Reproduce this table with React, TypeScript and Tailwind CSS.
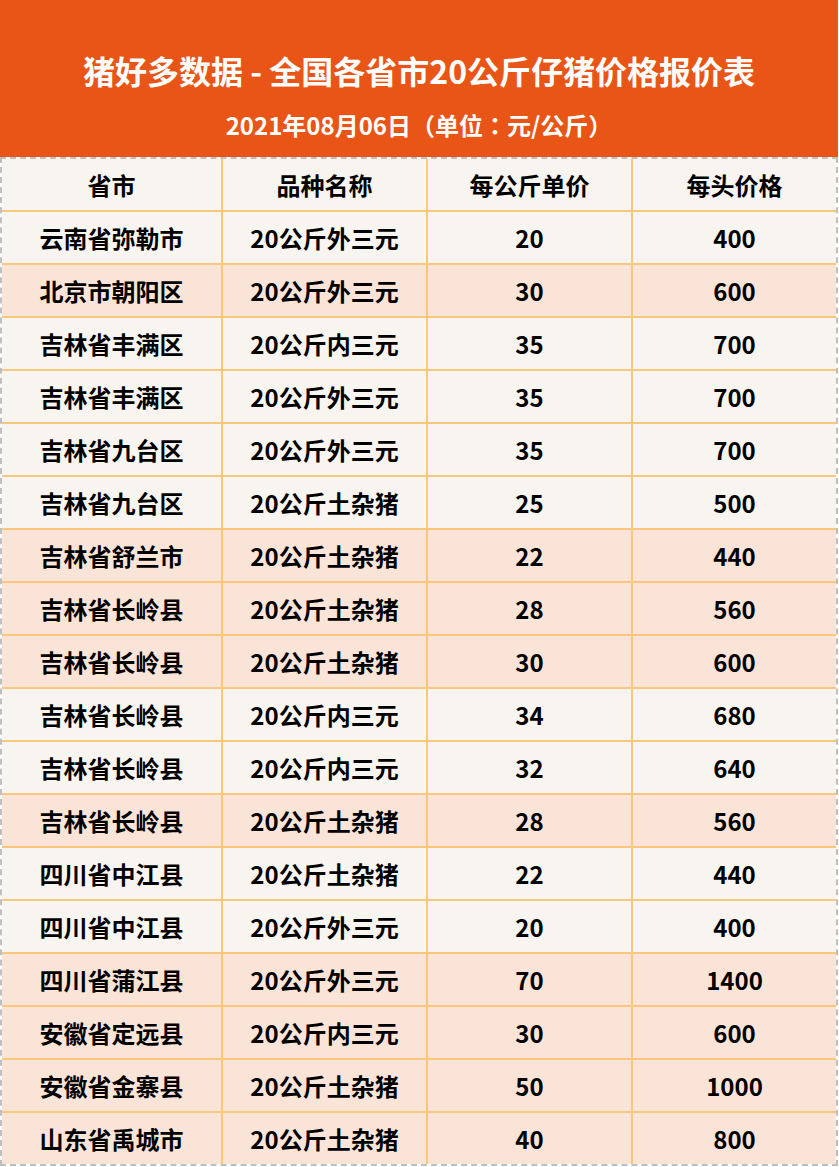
const rows: [string, string, string, string, boolean][] = [
  ["云南省弥勒市", "20公斤外三元", "20", "400", false],
  ["北京市朝阳区", "20公斤外三元", "30", "600", true],
  ["吉林省丰满区", "20公斤内三元", "35", "700", false],
  ["吉林省丰满区", "20公斤外三元", "35", "700", false],
  ["吉林省九台区", "20公斤外三元", "35", "700", false],
  ["吉林省九台区", "20公斤土杂猪", "25", "500", false],
  ["吉林省舒兰市", "20公斤土杂猪", "22", "440", true],
  ["吉林省长岭县", "20公斤土杂猪", "28", "560", true],
  ["吉林省长岭县", "20公斤土杂猪", "30", "600", true],
  ["吉林省长岭县", "20公斤内三元", "34", "680", false],
  ["吉林省长岭县", "20公斤内三元", "32", "640", false],
  ["吉林省长岭县", "20公斤土杂猪", "28", "560", true],
  ["四川省中江县", "20公斤土杂猪", "22", "440", false],
  ["四川省中江县", "20公斤外三元", "20", "400", false],
  ["四川省蒲江县", "20公斤外三元", "70", "1400", true],
  ["安徽省定远县", "20公斤内三元", "30", "600", true],
  ["安徽省金寨县", "20公斤土杂猪", "50", "1000", true],
  ["山东省禹城市", "20公斤土杂猪", "40", "800", true],
];

const headers = ["省市", "品种名称", "每公斤单价", "每头价格"];

const Cell = ({ children, last, bottom }) => (
  <div
    className={
      "flex items-center justify-center text-[24px] leading-none font-bold text-black " +
      (last ? "" : "border-r-2 border-[#fac87c] ") +
      (bottom ? "h-[51px]" : "h-[53px] border-b-2 border-[#fac87c]")
    }
  >
    {children}
  </div>
);

export default function App() {
  return (
    <div className="w-[838px] bg-white" style={{ fontFamily: '"Noto Sans CJK SC", "Noto Sans", sans-serif' }}>
      <div className="h-[157px] bg-[#e95516] flex flex-col items-center text-white font-bold pt-[50px]">
        <div className="text-[32px] leading-[40px] h-[40px]">猪好多数据 - 全国各省市20公斤仔猪价格报价表</div>
        <div className="text-[24px] leading-[30px] mt-[20px]">
          2021年08月06日（单位<span className="font-['Noto_Sans_CJK_TC']">：</span>元/公斤）
        </div>
      </div>
      <div className="border-2 border-dashed border-[#bfbfbf]">
        <div className="grid grid-cols-[221px_205px_205px_1fr] bg-[#f8f4f0]">
          {headers.map((h, i) => (
            <div
              key={h}
              className={
                "h-[53px] border-b-2 border-[#fac87c] flex items-center justify-center text-[24px] leading-none font-bold text-black " +
                (i < 3 ? "border-r-2" : "")
              }
            >
              {h}
            </div>
          ))}
        </div>
        {rows.map((r, idx) => (
          <div
            key={idx}
            className={"grid grid-cols-[221px_205px_205px_1fr] " + (r[4] ? "bg-[#fae4d8]" : "bg-[#f8f4f0]")}
          >
            {r.slice(0, 4).map((c, i) => (
              <Cell key={i} last={i === 3} bottom={idx === rows.length - 1}>
                {c}
              </Cell>
            ))}
          </div>
        ))}
      </div>
    </div>
  );
}
